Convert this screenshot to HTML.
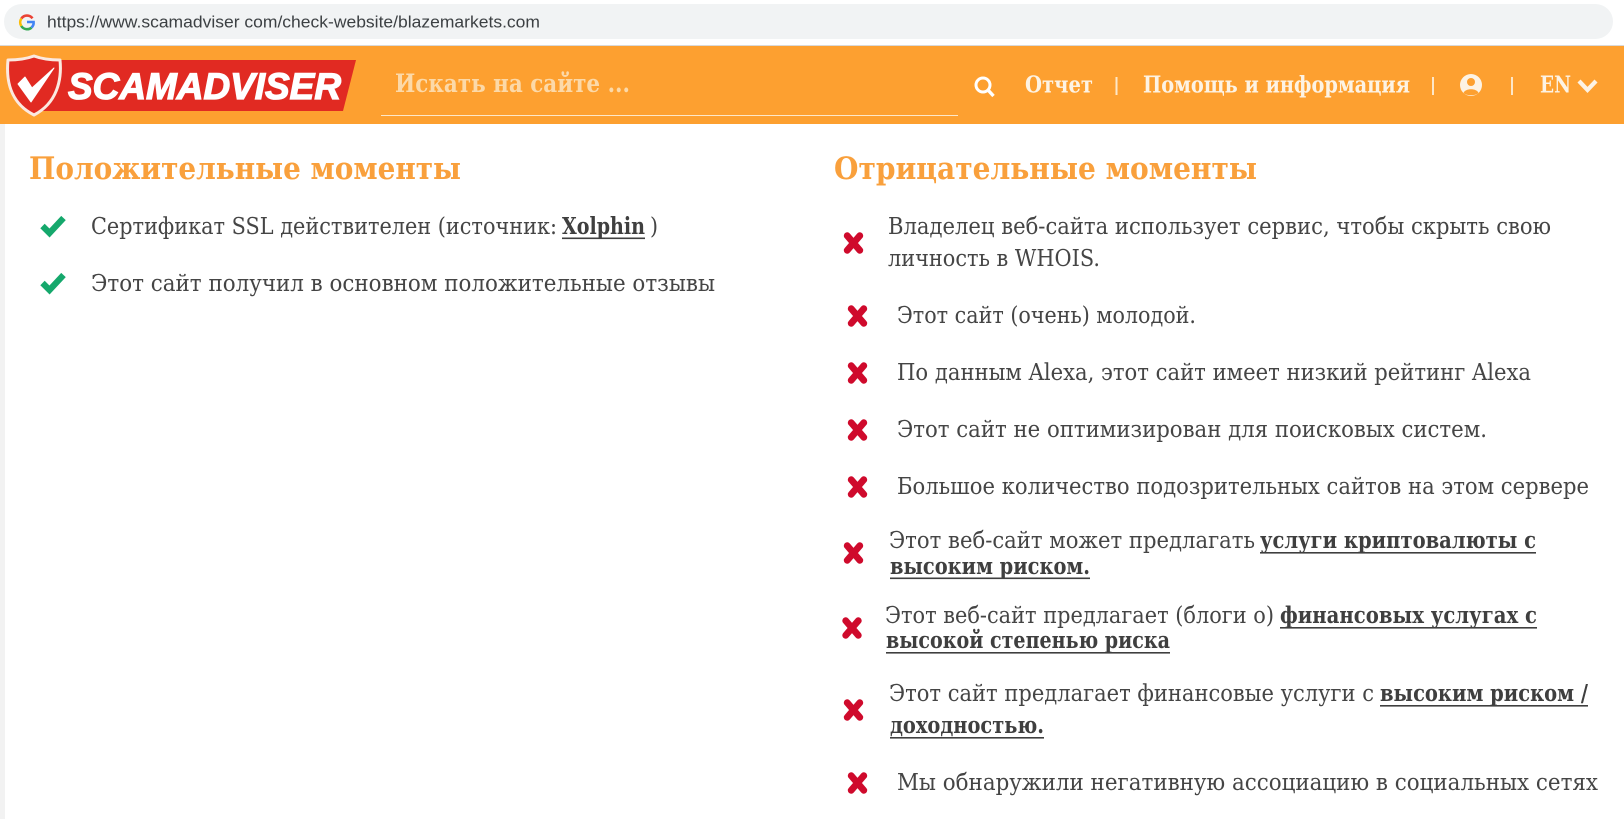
<!DOCTYPE html>
<html lang="ru">
<head>
<meta charset="utf-8">
<title>Scamadviser</title>
<style>
html,body{margin:0;padding:0;background:#fff;width:1624px;height:819px;overflow:hidden}
svg{display:block;filter:blur(.35px)}
.t{font-family:"DejaVu Serif","Liberation Serif",serif;font-size:23px;fill:#454545}
.b{font-weight:bold;fill:#3f3f3f}
.h{font-family:"DejaVu Serif","Liberation Serif",serif;font-size:31px;font-weight:bold;fill:#f9a03c}
.n{font-family:"DejaVu Serif","Liberation Serif",serif;font-size:23px;font-weight:bold;fill:#fdf3e4}
</style>
</head>
<body>
<svg width="1624" height="819" viewBox="0 0 1624 819" xmlns="http://www.w3.org/2000/svg">
<defs>
<path id="x" d="M-6.300-7.300 6.300 7.300M6.300-7.300-6.300 7.300" stroke="#cf0a2c" stroke-width="6.800" stroke-linecap="round" fill="none"/>
<path id="c" d="M-10.500 0-3.500 7 10.500-8" stroke="#15a86c" stroke-width="6.200" fill="none" stroke-linecap="butt"/>
</defs>
<rect width="1624" height="819" fill="#fff"/>
<rect x="0" y="124" width="5" height="695" fill="#f2f2f2"/>

<!-- browser bar -->
<rect x="4" y="4" width="1609" height="35" rx="17.500" fill="#f1f3f4"/>
<rect x="0" y="45" width="1624" height="1" fill="#d9d9d9"/>
<g fill="none" stroke-width="2.600">
<path d="M32.500 18.300A6.800 6.800 0 0 0 21.400 18.500" stroke="#ea4335"/>
<path d="M21.400 18.500A6.800 6.800 0 0 0 21.300 26" stroke="#fbbc05"/>
<path d="M21.300 26A6.800 6.800 0 0 0 31.500 27.600" stroke="#34a853"/>
<path d="M31.500 27.600A6.800 6.800 0 0 0 33.600 22H27" stroke="#4285f4"/>
</g>
<text x="47" y="27.500" font-family="Liberation Sans,sans-serif" font-size="17" fill="#3c4043" textLength="493" lengthAdjust="spacingAndGlyphs">https://www.scamadviser com/check-website/blazemarkets.com</text>

<!-- orange header -->
<rect x="0" y="46" width="1624" height="78" fill="#fda030"/>
<path d="M42 60H356L343 111H42Z" fill="#e12a22"/>
<path d="M34 56C26 59 16 60 8 60 6 80 10 103 34 115 57 103 62 80 60 60 52 60 42 59 34 56Z" fill="#e12a22" stroke="#fbe9e0" stroke-width="3" stroke-linejoin="round"/>
<path d="M18 84 31 102 54 68 32 88 25 77Z" fill="#fff" stroke="#fff" stroke-width="1" stroke-linejoin="round"/>
<text x="68" y="99" font-family="Liberation Sans,sans-serif" font-size="37" font-weight="bold" font-style="italic" fill="#fff" stroke="#fff" stroke-width="1.300" textLength="273" lengthAdjust="spacingAndGlyphs">SCAMADVISER</text>

<text x="395" y="92" class="n" style="font-size:25px;fill:#fcd9a8" textLength="235" lengthAdjust="spacingAndGlyphs">Искать на сайте ...</text>
<rect x="381" y="115" width="577" height="1" fill="#fde7c8"/>

<circle cx="983" cy="85" r="7" fill="none" stroke="#fff" stroke-width="3"/>
<path d="M988 90 993.500 96" stroke="#fff" stroke-width="3.400"/>
<text x="1025" y="92.500" class="n" textLength="68" lengthAdjust="spacingAndGlyphs">Отчет</text>
<rect x="1115.500" y="77" width="2" height="18" fill="#fde7c8"/>
<text x="1143" y="92.500" class="n" textLength="267" lengthAdjust="spacingAndGlyphs">Помощь и информация</text>
<rect x="1432" y="77" width="2" height="18" fill="#fde7c8"/>
<circle cx="1471" cy="85" r="11" fill="#fdf3e4"/>
<circle cx="1471" cy="82" r="4" fill="#fda030"/>
<path d="M1463.500 93C1465 88 1477 88 1478.500 93 1475 96 1467 96 1463.500 93Z" fill="#fda030"/>
<rect x="1511" y="77" width="2" height="18" fill="#fde7c8"/>
<text x="1540" y="92.500" class="n" textLength="31" lengthAdjust="spacingAndGlyphs">EN</text>
<path d="M1579 81 1587.500 90 1596 81" fill="none" stroke="#fdf3e4" stroke-width="4.200"/>

<!-- headings -->
<text x="29" y="179" class="h" textLength="432" lengthAdjust="spacingAndGlyphs">Положительные моменты</text>
<text x="834" y="179" class="h" textLength="423" lengthAdjust="spacingAndGlyphs">Отрицательные моменты</text>

<!-- positive -->
<use href="#c" x="53" y="226"/>
<text x="91" y="234" class="t" textLength="466" lengthAdjust="spacingAndGlyphs">Сертификат SSL действителен (источник:</text>
<text x="562" y="234" class="t b" textLength="83" lengthAdjust="spacingAndGlyphs">Xolphin</text>
<rect x="562" y="237.500" width="83" height="1.600" fill="#3f3f3f"/>
<text x="650" y="234" class="t" textLength="8" lengthAdjust="spacingAndGlyphs">)</text>
<use href="#c" x="53" y="283"/>
<text x="91" y="291" class="t" textLength="624" lengthAdjust="spacingAndGlyphs">Этот сайт получил в основном положительные отзывы</text>

<!-- negative -->
<use href="#x" x="853.500" y="243"/>
<text x="888" y="234" class="t" textLength="663" lengthAdjust="spacingAndGlyphs">Владелец веб-сайта использует сервис, чтобы скрыть свою</text>
<text x="888" y="266" class="t" textLength="212" lengthAdjust="spacingAndGlyphs">личность в WHOIS.</text>

<use href="#x" x="857.500" y="316"/>
<text x="897" y="323" class="t" textLength="299" lengthAdjust="spacingAndGlyphs">Этот сайт (очень) молодой.</text>

<use href="#x" x="857.500" y="373"/>
<text x="897" y="380" class="t" textLength="634" lengthAdjust="spacingAndGlyphs">По данным Alexa, этот сайт имеет низкий рейтинг Alexa</text>

<use href="#x" x="857.500" y="430"/>
<text x="897" y="437" class="t" textLength="590" lengthAdjust="spacingAndGlyphs">Этот сайт не оптимизирован для поисковых систем.</text>

<use href="#x" x="857.500" y="487"/>
<text x="897" y="494" class="t" textLength="692" lengthAdjust="spacingAndGlyphs">Большое количество подозрительных сайтов на этом сервере</text>

<use href="#x" x="853.500" y="553"/>
<text x="889" y="548" class="t" textLength="366" lengthAdjust="spacingAndGlyphs">Этот веб-сайт может предлагать</text>
<text x="1260" y="548" class="t b" textLength="276" lengthAdjust="spacingAndGlyphs">услуги криптовалюты с</text>
<rect x="1260" y="552" width="276" height="1.600" fill="#3f3f3f"/>
<text x="890" y="574" class="t b" textLength="200" lengthAdjust="spacingAndGlyphs">высоким риском.</text>
<rect x="890" y="577.500" width="200" height="1.600" fill="#3f3f3f"/>

<use href="#x" x="852" y="628"/>
<text x="885" y="623" class="t" textLength="389" lengthAdjust="spacingAndGlyphs">Этот веб-сайт предлагает (блоги о)</text>
<text x="1280" y="623" class="t b" textLength="257" lengthAdjust="spacingAndGlyphs">финансовых услугах с</text>
<rect x="1280" y="627" width="257" height="1.600" fill="#3f3f3f"/>
<text x="886" y="648" class="t b" textLength="284" lengthAdjust="spacingAndGlyphs">высокой степенью риска</text>
<rect x="886" y="652" width="284" height="1.600" fill="#3f3f3f"/>

<use href="#x" x="853.500" y="710"/>
<text x="889" y="701" class="t" textLength="485" lengthAdjust="spacingAndGlyphs">Этот сайт предлагает финансовые услуги с</text>
<text x="1380" y="701" class="t b" textLength="208" lengthAdjust="spacingAndGlyphs">высоким риском /</text>
<rect x="1380" y="705" width="208" height="1.600" fill="#3f3f3f"/>
<text x="890" y="733" class="t b" textLength="154" lengthAdjust="spacingAndGlyphs">доходностью.</text>
<rect x="890" y="737" width="154" height="1.600" fill="#3f3f3f"/>

<use href="#x" x="857.500" y="783"/>
<text x="897" y="790" class="t" textLength="701" lengthAdjust="spacingAndGlyphs">Мы обнаружили негативную ассоциацию в социальных сетях</text>
</svg>
</body>
</html>
